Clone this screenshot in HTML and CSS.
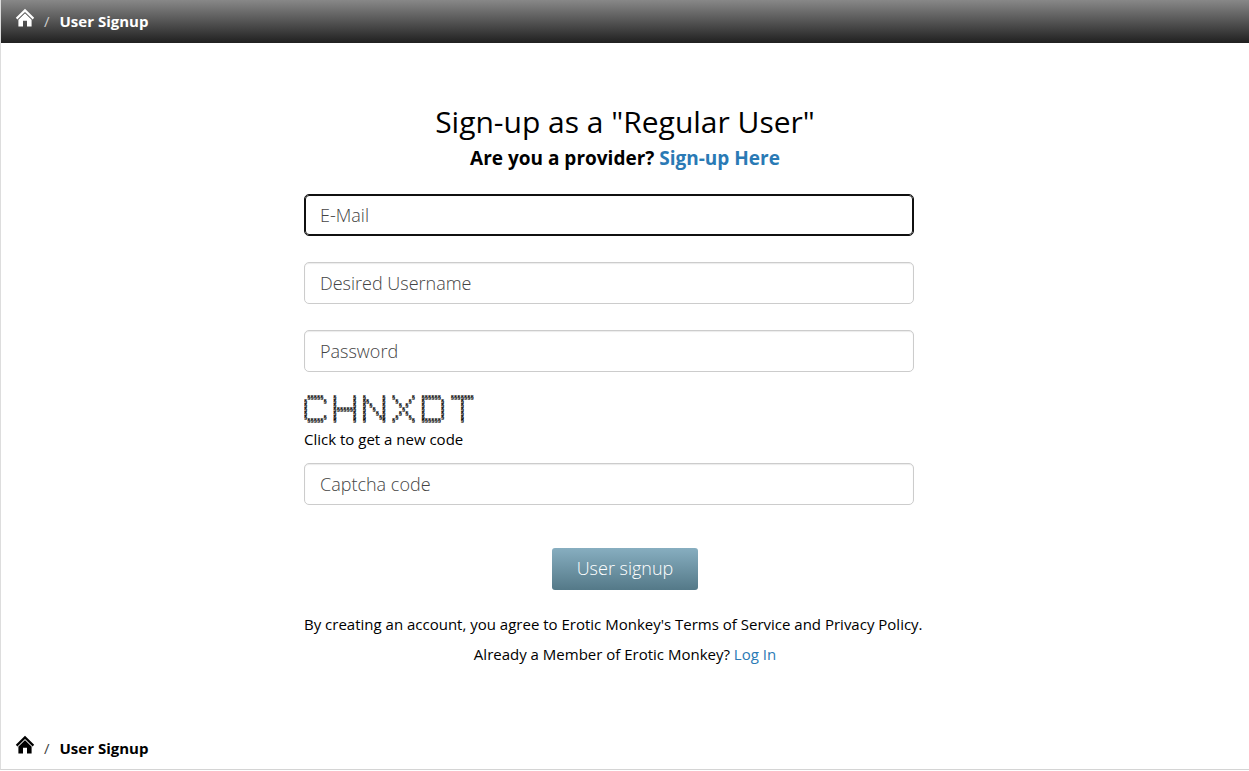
FILE: index.html
```html
<!DOCTYPE html>
<html lang="en">
<head>
<meta charset="utf-8">
<meta name="viewport" content="width=device-width, initial-scale=1">
<title>User Signup</title>
<link rel="stylesheet" href="styles.css">
</head>
<body>
<div class="page">
  <nav class="crumbs crumbs-top" aria-label="Breadcrumb">
    <a class="home" href="#" aria-label="Home"><svg viewBox="0 0 20 20" width="20" height="20"><path d="M10 5.2 16.6 11.5V18.5H12V12.8H8V18.5H3.4V11.5Z" fill="currentColor"/><path d="M1.6 10.6 10 2.4 18.4 10.6" fill="none" stroke="currentColor" stroke-width="2.2"/><path d="M2.8 11.8 10 4.9 17.2 11.8" fill="none" stroke="#777" stroke-width="1"/></svg></a>
    <span class="slash">/</span>
    <span class="current">User Signup</span>
  </nav>

  <main class="signup">
    <h1>Sign-up as a "Regular User"</h1>
    <h2>Are you a provider? <a href="#">Sign-up Here</a></h2>
    <form>
      <input class="field" type="email" placeholder="E-Mail" aria-label="E-Mail" autofocus>
      <input class="field" type="text" placeholder="Desired Username" aria-label="Desired Username">
      <input class="field" type="password" placeholder="Password" aria-label="Password">
      <button type="button" class="captcha">
        <svg class="code" viewBox="0 0 312 55" width="170" height="30" aria-label="C H N X D T">
          <text><tspan x="0" y="10"> §§§§§   §     §  §     §  §     §  §§§§§§   §§§§§§§</tspan><tspan x="0" y="17">§     §  §     §  §§    §   §   §   §     §     §</tspan><tspan x="0" y="24">§        §     §  § §   §    § §    §     §     §</tspan><tspan x="0" y="31">§        §§§§§§§  §  §  §     §     §     §     §</tspan><tspan x="0" y="38">§        §     §  §   § §    § §    §     §     §</tspan><tspan x="0" y="45">§     §  §     §  §    §§   §   §   §     §     §</tspan><tspan x="0" y="52"> §§§§§   §     §  §     §  §     §  §§§§§§      §</tspan></text>
        </svg>
        <span>Click to get a new code</span>
      </button>
      <input class="field" type="text" placeholder="Captcha code" aria-label="Captcha code">
      <button type="submit" class="submit">User signup</button>
    </form>
    <p class="terms">By creating an account, you agree to Erotic Monkey's Terms of Service and Privacy Policy.</p>
    <p class="member">Already a Member of Erotic Monkey? <a href="#">Log In</a></p>
  </main>

  <nav class="crumbs crumbs-bottom" aria-label="Breadcrumb footer">
    <a class="home" href="#" aria-label="Home"><svg viewBox="0 0 20 20" width="20" height="20"><path d="M10 5.2 16.6 11.5V18.5H12V12.8H8V18.5H3.4V11.5Z" fill="currentColor"/><path d="M1.6 10.6 10 2.4 18.4 10.6" fill="none" stroke="currentColor" stroke-width="2.2"/><path d="M2.8 11.8 10 4.9 17.2 11.8" fill="none" stroke="#999" stroke-width="1"/></svg></a>
    <span class="slash">/</span>
    <span class="current">User Signup</span>
  </nav>
</div>
</body>
</html>
```
FILE: styles.css
```css
* {
  box-sizing: border-box;
}

body {
  margin: 0;
  background: #fff;
  color: #000;
  font: 15px/20px "Open Sans", sans-serif;
}

a {
  color: #2a7ab5;
  text-decoration: none;
}

.page {
  border-left: 1px solid #ddd;
  border-bottom: 1px solid #d4d4d4;
}

.crumbs {
  display: flex;
  align-items: center;
  padding: 0 14px 2px;
  height: 43px;
}

.crumbs-top {
  background: linear-gradient(#888, #202020);
  color: #fff;
}

.crumbs-bottom {
  padding-bottom: 0;
}

.home {
  display: flex;
  color: inherit;
  padding-bottom: 5px;
}

.slash {
  padding: 0 10px 0 9px;
  color: #444;
}

.crumbs-top .slash {
  color: #ccc;
}

.current {
  font-weight: 700;
}

.signup {
  max-width: 642px;
  margin: 0 auto;
  padding: 62px 0;
}

h1 {
  margin: 0;
  font-size: 30px;
  line-height: 34px;
  font-weight: 400;
  text-align: center;
}

h2 {
  margin: 8px 0 25px;
  font-size: 19px;
  line-height: 22px;
  font-weight: 700;
  text-align: center;
}

form {
  display: flex;
  flex-direction: column;
  align-items: flex-start;
}

.field {
  width: 95%;
  height: 42px;
  margin: 0 0 26px;
  padding: 0 15px;
  border: 1px solid #ccc;
  border-radius: 5px;
  box-shadow: inset 0 1px 1px rgba(0, 0, 0, 0.08);
  font: 300 18px/24px "Open Sans", sans-serif;
}

.field::placeholder {
  color: #444;
}

.field:focus {
  border-color: #101010;
  outline: 1px solid #101010;
  outline-offset: -2px;
}

.captcha {
  display: flex;
  flex-direction: column;
  align-items: flex-start;
  gap: 5px;
  margin: -4px 0 14px;
  padding: 0;
  border: 0;
  background: none;
  color: #000;
  font: 15px/20px "Open Sans", sans-serif;
}

.code text {
  font: 700 10px "Liberation Mono", monospace;
  white-space: pre;
  stroke: #000;
  stroke-width: 0.3px;
}

.submit {
  align-self: center;
  height: 42px;
  margin-top: 17px;
  padding: 0 25px 2px;
  border: 0;
  border-radius: 3px;
  background: linear-gradient(#87aec0, #547988);
  color: #fff;
  font: 300 18px/24px "Open Sans", sans-serif;
}

.terms {
  margin: 24px 0 10px;
}

.member {
  margin: 0;
  text-align: center;
}
```
